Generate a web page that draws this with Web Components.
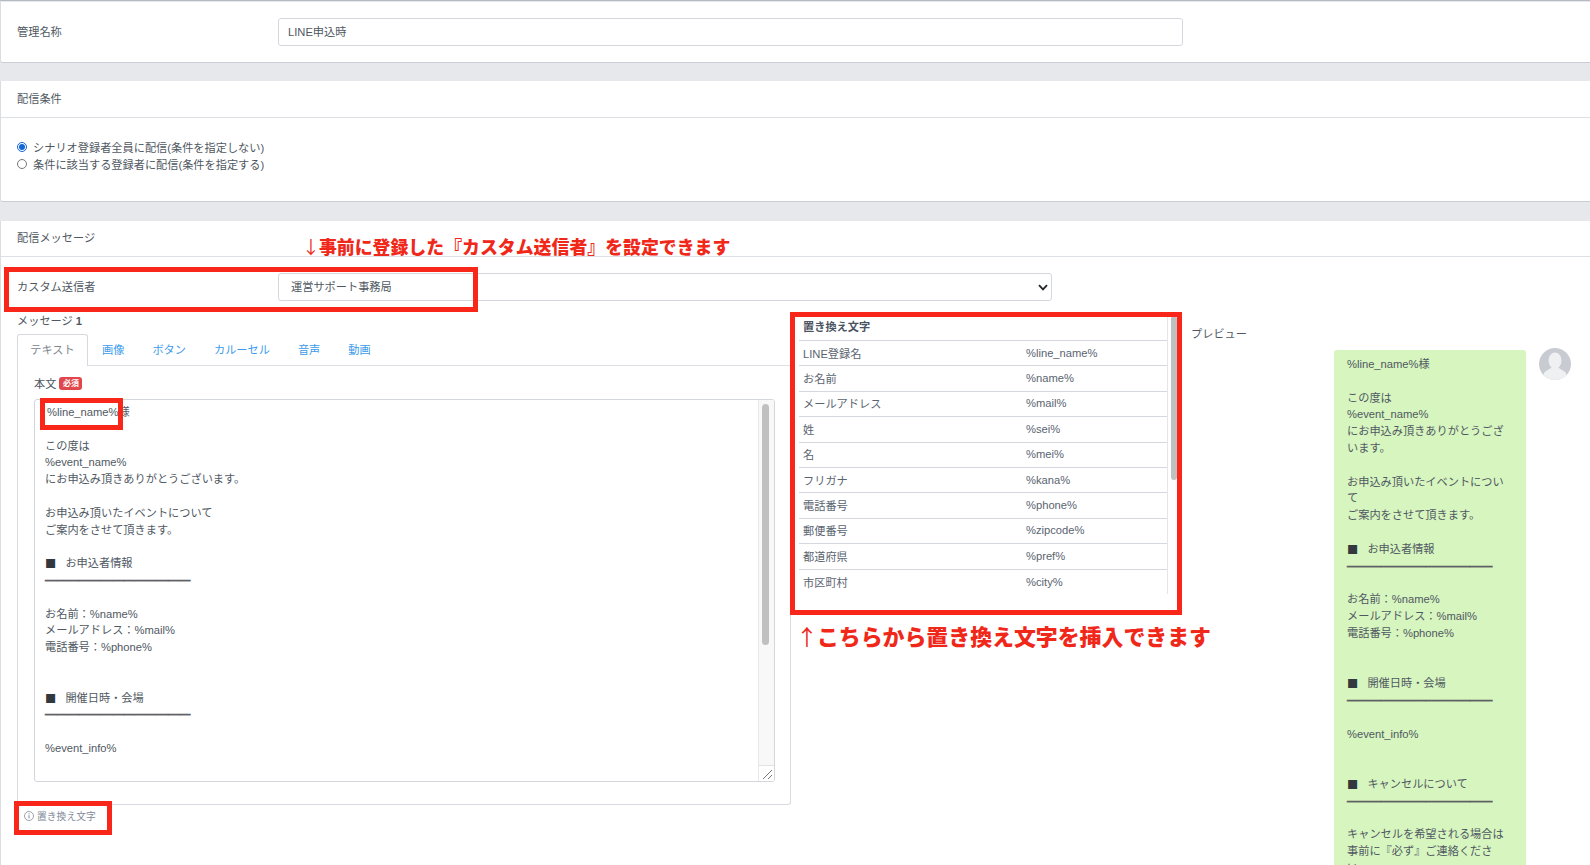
<!DOCTYPE html>
<html lang="ja">
<head>
<meta charset="utf-8">
<title>LINE申込時</title>
<style>
  html, body { margin: 0; height: 865px; overflow: hidden; }
  body {
    position: relative;
    background: #e6e8eb;
    font-family: "Liberation Sans", "Noto Sans CJK JP", sans-serif;
    font-size: 11.2px;
    color: #4f5862;
    padding-top: 2px;
    box-sizing: border-box;
    border-top: 1px solid #b4b9c2;
  }
</style>
</head>
<body>
  <form-card height="61" style="margin-top:-1px">
    <form-row label="管理名称" top="16"><text-field width="905">LINE申込時</text-field></form-row>
  </form-card>

  <form-card title="配信条件" head="36" lh="36" height="121" style="margin-top:18px">
    <radio-group></radio-group>
  </form-card>

  <form-card title="配信メッセージ" head="35" lh="34" height="660" style="margin-top:19px">
    <form-row label="カスタム送信者" top="16"><text-field width="774" indent="12" chevron>運営サポート事務局</text-field></form-row>
    <message-area>
      <message-editor></message-editor>
      <variable-table></variable-table>
      <line-preview></line-preview>
    </message-area>
  </form-card>

  <red-box x="4" y="266" w="474" h="45"></red-box>
  <red-box x="40" y="397" w="83" h="32"></red-box>
  <red-box x="790" y="311" w="392" h="303"></red-box>
  <red-box x="14" y="800" w="98" h="34"></red-box>
  <red-note x="302" y="231" size="17.9"><span>↓</span>事前に登録した『カスタム送信者』を設定できます</red-note>
  <red-note x="796" y="617" size="21.9"><span>↑</span>こちらから置き換え文字を挿入できます</red-note>

<script>
const CJK = `"Noto Sans CJK JP", sans-serif`;

// the black squares and rules come out too small in the latin font
const markup = text => text
  .replace(/■/g, '<span class="sq">■</span>')
  .replace(/━+/g, m => `<span class="rule">${m}</span>`);
const markupStyle = `
  .sq { font-family: ${CJK}; color: #33383e; line-height: 0; letter-spacing: -2px; vertical-align: -1px; }
  .rule { font-family: ${CJK}; color: #5c6166; -webkit-text-stroke: .4px #5c6166; line-height: 0; vertical-align: -1px; }`;

class FormCard extends HTMLElement {
  constructor() {
    super();
    const title = this.getAttribute('title');
    this.removeAttribute('title');
    this.attachShadow({ mode: 'open' }).innerHTML = `
      <style>
        :host {
          display: block;
          box-sizing: border-box;
          height: ${this.getAttribute('height')}px;
          background: #fff;
          border-left: 1px solid #d9dce1;
          border-bottom: 1px solid #c9cdd4;
          border-bottom-left-radius: 3px;
          overflow: hidden;
        }
        .head {
          height: ${this.getAttribute('head') || 35}px;
          line-height: ${this.getAttribute('lh') || 36}px;
          padding-left: 16px;
          border-bottom: 1px solid #dcdfe3;
          display: ${title ? 'block' : 'none'};
        }
      </style>
      <div class="head">${title || ''}</div>
      <slot></slot>`;
  }
}

class FormRow extends HTMLElement {
  constructor() {
    super();
    this.attachShadow({ mode: 'open' }).innerHTML = `
      <style>
        :host {
          display: flex;
          align-items: center;
          padding: ${this.getAttribute('top')}px 0 0 16px;
        }
        .label { width: 261px; margin-top: -3px; }
      </style>
      <div class="label">${this.getAttribute('label')}</div>
      <slot></slot>`;
  }
}

class TextField extends HTMLElement {
  constructor() {
    super();
    const chevron = this.hasAttribute('chevron')
      ? `<svg width="10" height="7" viewBox="0 0 10 7"><path d="M1 1.2 5 5.4l4-4.2" fill="none" stroke="#23272b" stroke-width="1.8"/></svg>`
      : '';
    this.attachShadow({ mode: 'open' }).innerHTML = `
      <style>
        :host {
          display: flex;
          align-items: center;
          justify-content: space-between;
          box-sizing: border-box;
          width: ${this.getAttribute('width')}px;
          height: 28px;
          padding: 0 3px 0 ${this.getAttribute('indent') || 9}px;
          background: #fff;
          border: 1px solid #d4d7dc;
          border-radius: 3px;
        }
        span { margin-top: -2px; }
      </style>
      <span><slot></slot></span>${chevron}`;
  }
}

class RadioGroup extends HTMLElement {
  constructor() {
    super();
    this.attachShadow({ mode: 'open' }).innerHTML = `
      <style>
        :host { display: flex; flex-direction: column; padding: 20px 0 0 16px; }
        label { display: flex; align-items: center; gap: 6px; height: 17px; }
        input { width: 10px; height: 10px; margin: 0; accent-color: #1565d8; }
      </style>
      <label><input type="radio" name="cond" checked>シナリオ登録者全員に配信(条件を指定しない)</label>
      <label><input type="radio" name="cond">条件に該当する登録者に配信(条件を指定する)</label>`;
  }
}

class MessageArea extends HTMLElement {
  constructor() {
    super();
    this.attachShadow({ mode: 'open' }).innerHTML = `
      <style>
        :host { display: flex; align-items: flex-start; padding: 13px 0 0 16px; }
      </style>
      <slot></slot>`;
  }
}

class MessageEditor extends HTMLElement {
  constructor() {
    super();
    const tabs = ['画像', 'ボタン', 'カルーセル', '音声', '動画'].map(t => `<a>${t}</a>`).join('');
    const lines = `この度は
%event_name%
にお申込み頂きありがとうございます。

お申込み頂いたイベントについて
ご案内をさせて頂きます。

■　お申込者情報
━━━━━━━━━━━━━

お名前：%name%
メールアドレス：%mail%
電話番号：%phone%


■　開催日時・会場
━━━━━━━━━━━━━

%event_info%`;
    this.attachShadow({ mode: 'open' }).innerHTML = `
      <style>
        :host { display: block; width: 774px; flex: none; }
        .title { height: 20px; line-height: 14px; }
        .tabs { display: flex; height: 32px; box-sizing: border-box; border-bottom: 1px solid #dcdfe3; }
        .active {
          width: 71px; height: 32px; box-sizing: border-box; text-align: center; line-height: 31px;
          color: #7d858e; background: #fff;
          border: 1px solid #d6d9de; border-bottom: 0; border-radius: 3px 3px 0 0;
        }
        a { color: #3c9bec; line-height: 33px; margin-left: 28px; }
        a:first-of-type { margin-left: 14px; }
        .pane {
          height: 439px; box-sizing: border-box; padding: 6px 15px 0 16px;
          border: 1px solid #d8dbe0; border-top: 0; border-radius: 0 0 3px 3px;
        }
        .field-label { display: flex; align-items: center; gap: 3px; height: 21px; margin-bottom: 6px; }
        .badge {
          width: 23px; height: 13px; line-height: 13px; text-align: center; margin-top: 2px;
          font-size: 8px; font-weight: 700; color: #fff; background: #e0474c; border-radius: 3px;
        }
        .box {
          display: flex; height: 383px; box-sizing: border-box;
          border: 1px solid #d3d6db; border-radius: 3px; overflow: hidden;
        }
        .text {
          flex: 1; margin: 0; padding: 4px 0 0 10px; overflow: hidden;
          font: inherit; line-height: 16.8px; white-space: pre-wrap; color: #4f5862;
        }
        .first { margin-left: 2px; }
        .bar { width: 15px; display: flex; flex-direction: column; background: #f8f8f8; border-left: 1px solid #e8e8e8; }
        .track { flex: 1; padding: 4px 5px 0 3px; box-sizing: border-box; }
        .thumb { height: 241px; background: #c0c0c0; border-radius: 4px; }
        .corner { height: 15px; border-top: 1px solid #e2e2e2; background: #fff; }
        .foot { display: flex; align-items: center; gap: 3px; padding: 4px 0 0 7px; font-size: 9.8px; color: #828b98; }
        ${markupStyle}
      </style>
      <div class="title">メッセージ <b>1</b></div>
      <div class="tabs"><div class="active">テキスト</div>${tabs}</div>
      <div class="pane">
        <div class="field-label">本文<span class="badge">必須</span></div>
        <div class="box">
          <pre class="text"><span class="first">%line_name%様</span>

${markup(lines)}</pre>
          <div class="bar">
            <div class="track"><div class="thumb"></div></div>
            <div class="corner"><svg width="14" height="14" viewBox="0 0 14 14"><path d="M4 13 13 4M9 13l4-4" stroke="#777" fill="none"/></svg></div>
          </div>
        </div>
      </div>
      <div class="foot">
        <svg width="10" height="10" viewBox="0 0 10 10"><circle cx="5" cy="5" r="4.5" fill="none" stroke="#828b98" stroke-width=".8"/><path d="M5 4.2v3.2" stroke="#828b98"/><circle cx="5" cy="2.8" r=".6" fill="#828b98"/></svg>
        置き換え文字
      </div>`;
  }
}

class VariableTable extends HTMLElement {
  constructor() {
    super();
    const rows = [
      ['LINE登録名', '%line_name%'], ['お名前', '%name%'], ['メールアドレス', '%mail%'],
      ['姓', '%sei%'], ['名', '%mei%'], ['フリガナ', '%kana%'], ['電話番号', '%phone%'],
      ['郵便番号', '%zipcode%'], ['都道府県', '%pref%'], ['市区町村', '%city%']
    ].map(([k, v]) => `<div class="row"><span>${k}</span><span>${v}</span></div>`).join('');
    this.attachShadow({ mode: 'open' }).innerHTML = `
      <style>
        :host {
          display: flex; flex: none; box-sizing: border-box;
          width: 391px; height: 280px; padding: 0 5px 0 8px;
        }
        .list { width: 369px; overflow: hidden; color: #5a6470; border-right: 1px solid #e6e6e6; }
        .head { height: 26px; line-height: 27px; padding-left: 4px; font-weight: 700; color: #4a5360; border-bottom: 1px solid #d5d8dc; }
        .row {
          display: grid; grid-template-columns: 223px 1fr; align-items: center;
          height: 25.4px; box-sizing: border-box; padding: 0 0 1px 4px; border-bottom: 1px solid #d5d8dc;
        }
        .row:last-child { border-bottom: 0; }
        .bar { flex: 1; padding: 2px 0 0 3px; }
        .thumb { width: 6px; height: 164px; background: #c0c0c0; border-radius: 3px; }
      </style>
      <div class="list"><div class="head">置き換え文字</div>${rows}</div>
      <div class="bar"><div class="thumb"></div></div>`;
  }
}

class LinePreview extends HTMLElement {
  constructor() {
    super();
    const text = `%line_name%様

この度は
%event_name%
にお申込み頂きありがとうございます。

お申込み頂いたイベントについて
ご案内をさせて頂きます。

■　お申込者情報
━━━━━━━━━━━━━

お名前：%name%
メールアドレス：%mail%
電話番号：%phone%


■　開催日時・会場
━━━━━━━━━━━━━

%event_info%


■　キャンセルについて
━━━━━━━━━━━━━

キャンセルを希望される場合は
事前に『必ず』ご連絡ください。`;
    this.attachShadow({ mode: 'open' }).innerHTML = `
      <style>
        :host { display: block; flex: none; width: 399px; padding: 10px 0 0 9px; box-sizing: border-box; }
        .title { height: 24px; line-height: 16px; margin-top: 2px; }
        .row { display: flex; align-items: flex-start; margin-left: 143px; }
        .bubble {
          width: 192px; height: 530px; box-sizing: border-box; padding: 6px 13px 0;
          background: #d7f5bf; border-radius: 3px 3px 0 0; overflow: hidden;
          line-height: 16.8px; white-space: pre-wrap;
        }
        svg { margin: -2px 0 0 13px; flex: none; }
        ${markupStyle}
      </style>
      <div class="title">プレビュー</div>
      <div class="row">
        <div class="bubble">${markup(text)}</div>
        <svg width="32" height="32" viewBox="0 0 32 32">
          <defs><clipPath id="c"><circle cx="16" cy="16" r="16"/></clipPath></defs>
          <g clip-path="url(#c)">
            <rect width="32" height="32" fill="#c8ccd2"/>
            <ellipse cx="16" cy="12.5" rx="6.5" ry="8" fill="#eef0f2"/>
            <path d="M13 18c0 3-6 4-8 7l-1 7h24l-1-7c-2-3-8-4-8-7z" fill="#eef0f2"/>
          </g>
        </svg>
      </div>`;
  }
}

// highlight frames drawn on top of the screenshot
class RedBox extends HTMLElement {
  constructor() {
    super();
    const a = n => this.getAttribute(n);
    this.attachShadow({ mode: 'open' }).innerHTML = `
      <style>
        :host {
          position: absolute; left: ${a('x')}px; top: ${a('y')}px;
          width: ${a('w')}px; height: ${a('h')}px;
          box-sizing: border-box; border: 5px solid #f9261a; pointer-events: none;
        }
      </style>`;
  }
}

class RedNote extends HTMLElement {
  constructor() {
    super();
    const a = n => this.getAttribute(n);
    this.attachShadow({ mode: 'open' }).innerHTML = `
      <style>
        :host {
          position: absolute; left: ${a('x')}px; top: ${a('y')}px;
          font: 900 ${a('size')}px/1.6 ${CJK}; color: #f0281a; white-space: nowrap;
        }
        ::slotted(span) { font-weight: 400; letter-spacing: -1px; }
      </style>
      <slot></slot>`;
  }
}

customElements.define('form-card', FormCard);
customElements.define('form-row', FormRow);
customElements.define('text-field', TextField);
customElements.define('radio-group', RadioGroup);
customElements.define('message-area', MessageArea);
customElements.define('message-editor', MessageEditor);
customElements.define('variable-table', VariableTable);
customElements.define('line-preview', LinePreview);
customElements.define('red-box', RedBox);
customElements.define('red-note', RedNote);
</script>
</body>
</html>
